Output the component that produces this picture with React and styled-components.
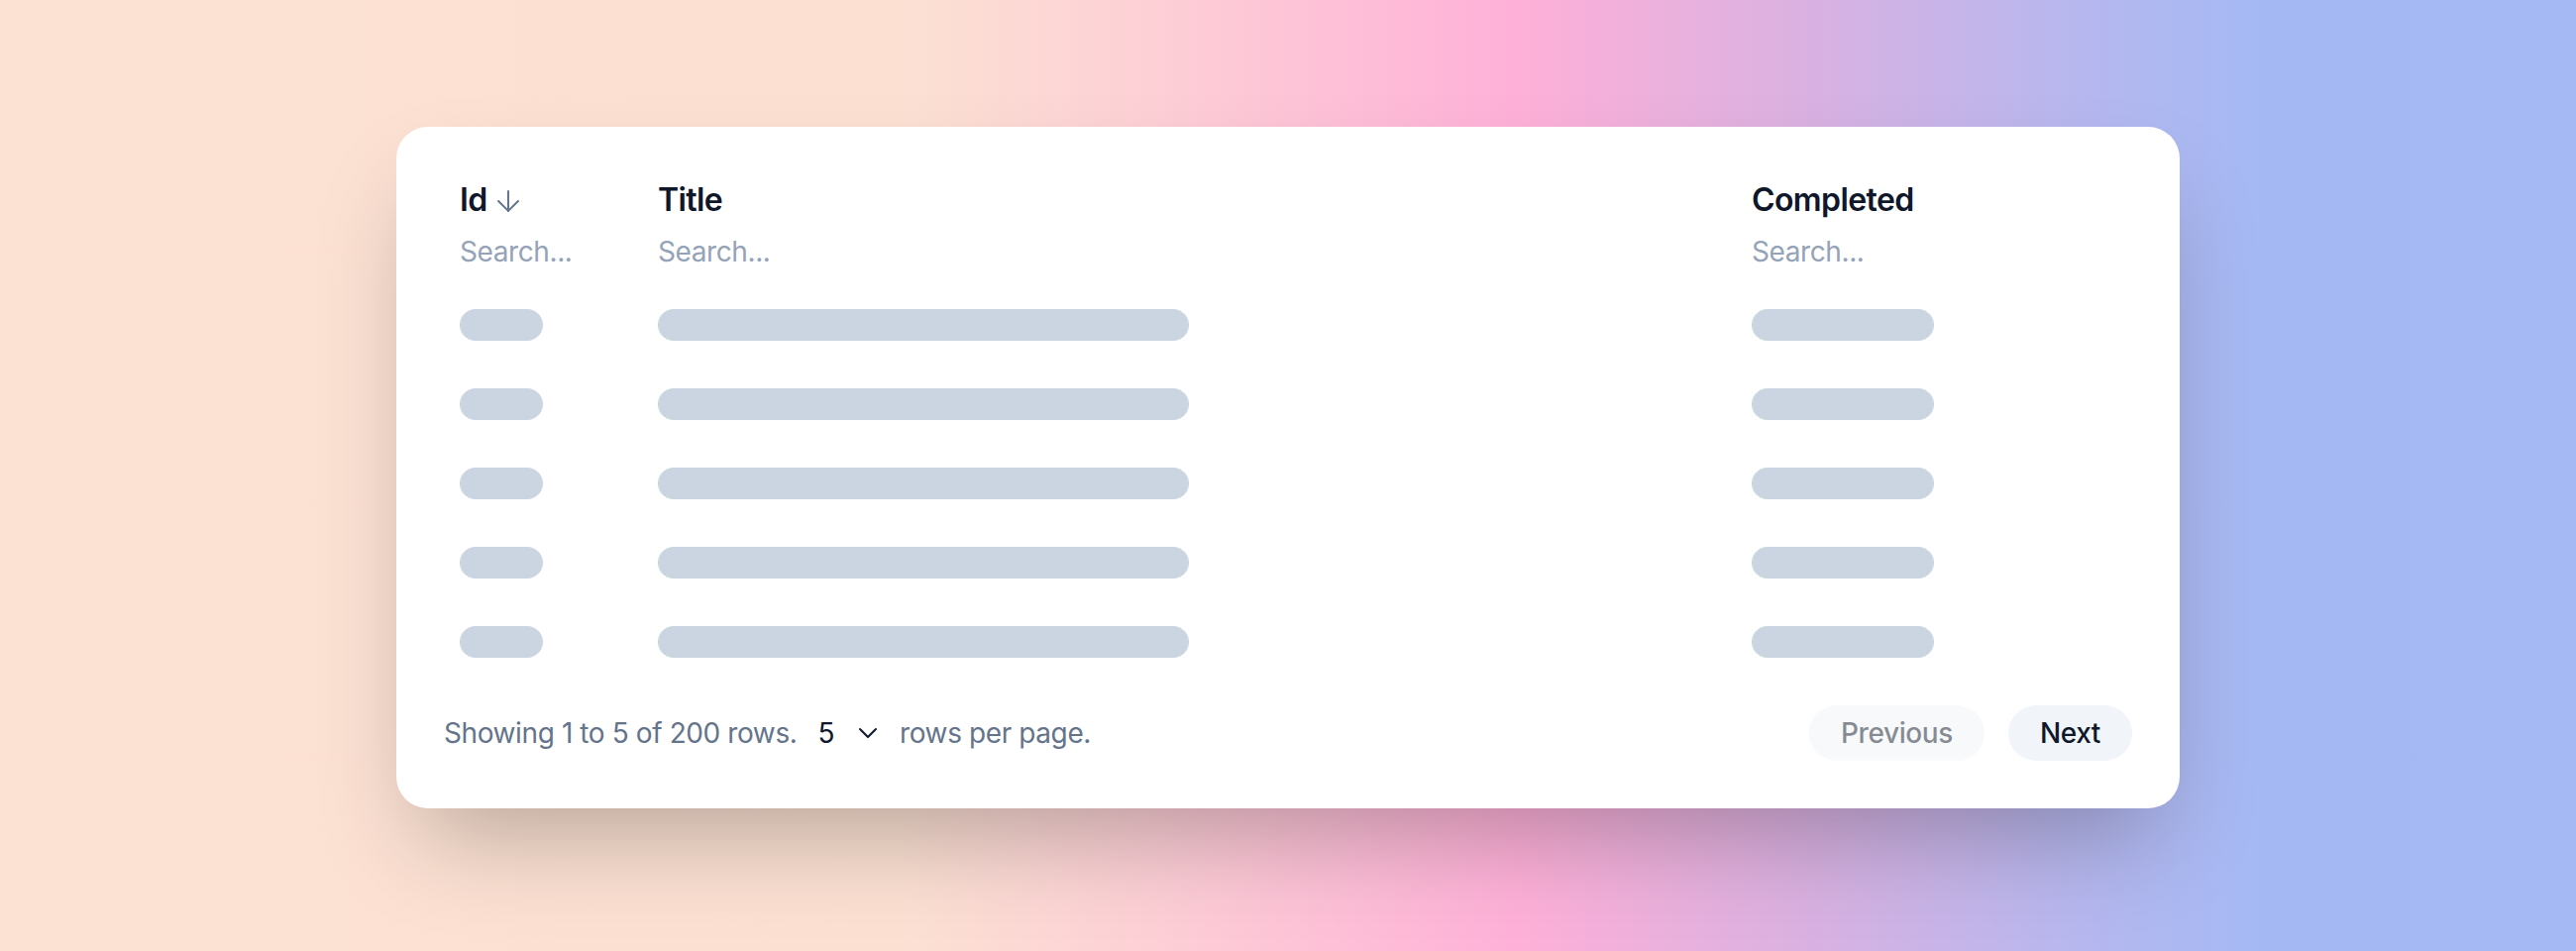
import React from 'react';
import styled, { createGlobalStyle } from 'styled-components';
import { ArrowDown, ChevronDown } from 'lucide-react';

const GlobalStyle = createGlobalStyle`
  html, body {
    margin: 0;
    padding: 0;
  }
  body {
    font-family: Inter, "Noto Sans", "Liberation Sans", sans-serif;
    -webkit-font-smoothing: antialiased;
  }
  * { box-sizing: border-box; }
`

const columns = [
  { key: 'id', label: 'Id', sorted: true, bar: 84 },
  { key: 'title', label: 'Title', bar: 536 },
  { key: 'completed', label: 'Completed', bar: 184 },
]

const rows = [1, 2, 3, 4, 5]

function App() {
  return (
    <>
      <GlobalStyle />
      <Page>
        <Card>
          <HeaderRow>
            {columns.map(col => (
              <HeaderCell key={col.key}>
                <ColumnTitle>
                  {col.label}
                  {col.sorted ? <SortIcon><ArrowDown size={34} strokeWidth={1.4} /></SortIcon> : null}
                </ColumnTitle>
                <SearchInput placeholder="Search..." />
              </HeaderCell>
            ))}
          </HeaderRow>
          {rows.map(r => (
            <Row key={r}>
              {columns.map(col => (
                <Cell key={col.key}>
                  <Skeleton $width={col.bar} />
                </Cell>
              ))}
            </Row>
          ))}
          <Footer>
            <FooterInfo>
              <span>Showing 1 to 5 of 200 rows.</span>
              <PageSize>
                5
                <ChevronDown size={32} strokeWidth={1.5} />
              </PageSize>
              <span>rows per page.</span>
            </FooterInfo>
            <Pager>
              <PagerButton disabled>Previous</PagerButton>
              <PagerButton>Next</PagerButton>
            </Pager>
          </Footer>
        </Card>
      </Page>
    </>
  );
}

export default App;

const Page = styled.div`
  width: 100%;
  min-height: 960px;
  display: flex;
  justify-content: center;
  align-items: flex-start;
  padding-top: 128px;
  background: linear-gradient(90deg,
    #fce2d3 0%,
    #fce1d3 35%,
    #fdcfd6 45%,
    #feb0d8 59%,
    #dab1e1 70%,
    #b8b7ee 80%,
    #a4b9f4 88%,
    #a5b9f4 100%);
`

const Card = styled.div`
  width: 1800px;
  background: #ffffff;
  border-radius: 32px;
  padding: 48px;
  box-shadow: 0 50px 100px -24px rgba(0, 0, 0, 0.27);
`

const HeaderRow = styled.div`
  display: grid;
  grid-template-columns: 200px 1fr 400px;
  padding-bottom: 12px;
`

const HeaderCell = styled.div`
  display: flex;
  flex-direction: column;
  gap: 4px;
  padding: 0 16px;
`

const ColumnTitle = styled.div`
  display: flex;
  align-items: center;
  gap: 4px;
  height: 52px;
  font-size: 32px;
  line-height: 52px;
  font-weight: 600;
  letter-spacing: -0.6px;
  color: #0f172a;
`

const SortIcon = styled.span`
  display: flex;
  color: #64748b;
  margin-top: 2px;
`

const SearchInput = styled.input`
  width: 100%;
  height: 44px;
  padding: 0;
  border: none;
  outline: none;
  background: transparent;
  font-family: inherit;
  font-size: 28px;
  letter-spacing: -0.4px;
  color: #0f172a;
  &::placeholder {
    color: #94a3b8;
  }
`

const Row = styled.div`
  display: grid;
  grid-template-columns: 200px 1fr 400px;
  height: 80px;
  align-items: center;
`

const Cell = styled.div`
  padding: 0 16px;
  display: flex;
  align-items: center;
`

const Skeleton = styled.div`
  width: ${p => p.$width}px;
  height: 32px;
  border-radius: 16px;
  background: #cbd5e1;
`

const Footer = styled.div`
  display: flex;
  align-items: center;
  justify-content: space-between;
  margin-top: 24px;
  height: 56px;
`

const FooterInfo = styled.div`
  display: flex;
  align-items: center;
  gap: 16px;
  font-size: 28px;
  line-height: 40px;
  letter-spacing: -0.4px;
  color: #64748b;
`

const PageSize = styled.div`
  display: flex;
  align-items: center;
  gap: 18px;
  padding-left: 5px;
  color: #0f172a;
`

const Pager = styled.div`
  display: flex;
  align-items: center;
  gap: 24px;
`

const PagerButton = styled.button`
  height: 56px;
  padding: 0 32px;
  border: none;
  border-radius: 9999px;
  background: #f1f5f9;
  color: #0f172a;
  font-family: inherit;
  font-size: 28px;
  font-weight: 500;
  letter-spacing: -0.4px;
  cursor: pointer;
  &:disabled {
    opacity: 0.5;
    cursor: default;
  }
`
